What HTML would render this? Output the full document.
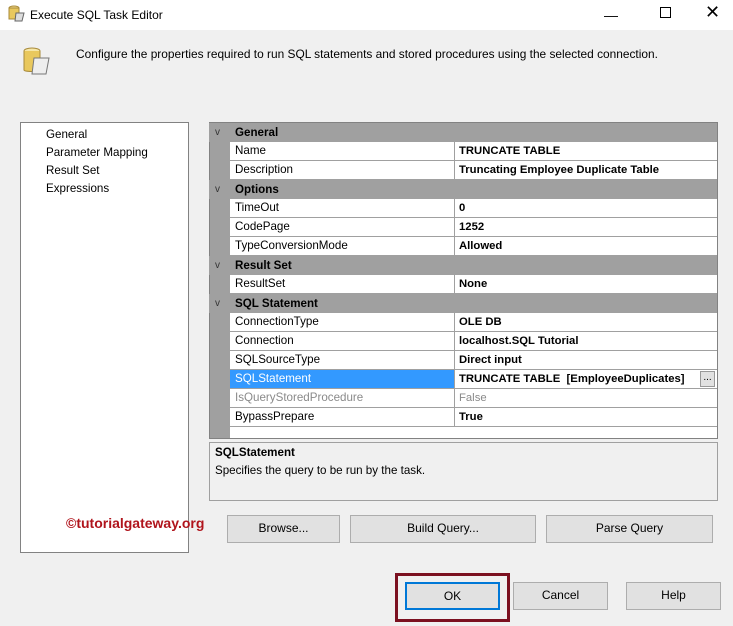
<!DOCTYPE html>
<html><head><style>
*{box-sizing:border-box;margin:0;padding:0}
body{width:733px;height:626px;background:#f0f0f0;font-family:"Liberation Sans",sans-serif;font-size:11.6px;color:#000;position:relative;overflow:hidden}
.abs{position:absolute}
.title{left:0;top:0;width:733px;height:30px;background:#fff}
.btn{position:absolute;background:#e1e1e1;border:1px solid #adadad;text-align:center;line-height:25px;font-size:12px}
.row{position:absolute;left:209px;width:508px;height:19px}
.row .n{position:absolute;left:21px;width:224px;height:19px;background:#fff;border-bottom:1px solid #a0a0a0;padding-left:5px;line-height:18px}
.row .v{position:absolute;left:245px;width:263px;height:19px;background:#fff;border-bottom:1px solid #a0a0a0;border-left:1px solid #a0a0a0;padding-left:4px;line-height:18px;font-weight:bold;font-size:11.3px}
.hdr{background:#a0a0a0;font-weight:bold;line-height:19px}
.hdr span{position:absolute;left:26px}
.hdr i{position:absolute;left:6px;font-style:normal;font-weight:normal;font-size:10px;color:#333}
</style></head><body>
<div class="abs title"></div>
<svg class="abs" style="left:8px;top:5px" width="18" height="18"><ellipse cx="6" cy="3" rx="5" ry="2" fill="#f3dc8e" stroke="#a88a3a"/><rect x="1" y="3" width="10" height="11" fill="#e9c85d" stroke="#a88a3a"/><path d="M8 8h8l-2 8H7z" fill="#ddd" stroke="#666"/></svg>
<div class="abs" style="left:30px;top:8px;font-size:12px">Execute SQL Task Editor</div>
<div class="abs" style="left:604px;top:7px;font-size:14px">—</div>
<div class="abs" style="left:660px;top:7px;width:11px;height:11px;border:1px solid #000"></div>
<div class="abs" style="left:705px;top:2px;font-size:18px">✕</div>
<svg class="abs" style="left:22px;top:46px" width="32" height="32"><ellipse cx="10" cy="5" rx="8" ry="3" fill="#f6e7a8" stroke="#a88a3a"/><path d="M2 5v19c0 2 16 2 16 0V5" fill="#e9c85d" stroke="#a88a3a"/><path d="M12 12h15l-3 16H10z" fill="#eee" stroke="#777"/></svg>
<div class="abs" style="left:76px;top:47px;font-size:11.9px">Configure the properties required to run SQL statements and stored procedures using the selected connection.</div>
<div class="abs" style="left:20px;top:122px;width:169px;height:431px;background:#fff;border:1px solid #828282"></div>
<div class="abs" style="left:46px;top:126px;line-height:18px">General<br>Parameter Mapping<br>Result Set<br>Expressions</div>
<div class="abs" style="left:209px;top:122px;width:509px;height:317px;background:#a0a0a0;border:1px solid #828282"></div>
<div class="abs" style="left:230px;top:427px;width:487px;height:11px;background:#fff"></div>

<div class="row hdr" style="top:123px"><i>v</i><span>General</span></div>
<div class="row" style="top:142px"><div class="n">Name</div><div class="v">TRUNCATE TABLE</div></div>
<div class="row" style="top:161px"><div class="n">Description</div><div class="v">Truncating Employee Duplicate Table</div></div>
<div class="row hdr" style="top:180px"><i>v</i><span>Options</span></div>
<div class="row" style="top:199px"><div class="n">TimeOut</div><div class="v">0</div></div>
<div class="row" style="top:218px"><div class="n">CodePage</div><div class="v">1252</div></div>
<div class="row" style="top:237px"><div class="n">TypeConversionMode</div><div class="v">Allowed</div></div>
<div class="row hdr" style="top:256px"><i>v</i><span>Result Set</span></div>
<div class="row" style="top:275px"><div class="n">ResultSet</div><div class="v">None</div></div>
<div class="row hdr" style="top:294px"><i>v</i><span>SQL Statement</span></div>
<div class="row" style="top:313px"><div class="n">ConnectionType</div><div class="v">OLE DB</div></div>
<div class="row" style="top:332px"><div class="n">Connection</div><div class="v">localhost.SQL Tutorial</div></div>
<div class="row" style="top:351px"><div class="n">SQLSourceType</div><div class="v">Direct input</div></div>
<div class="row" style="top:370px"><div class="n" style="background:#3399ff;color:#fff">SQLStatement</div><div class="v">TRUNCATE TABLE&nbsp; [EmployeeDuplicates]<div class="abs" style="left:245px;top:1px;width:15px;height:16px;background:#e1e1e1;border:1px solid #999;font-weight:normal;font-size:10px;line-height:12px;text-align:center">...</div></div></div>
<div class="row" style="top:389px"><div class="n" style="color:#8a8a8a">IsQueryStoredProcedure</div><div class="v" style="color:#8a8a8a;font-weight:normal">False</div></div>
<div class="row" style="top:408px"><div class="n">BypassPrepare</div><div class="v">True</div></div>

<div class="abs" style="left:209px;top:442px;width:509px;height:59px;border:1px solid #a0a0a0"></div>
<div class="abs" style="left:215px;top:446px;font-weight:bold">SQLStatement</div>
<div class="abs" style="left:215px;top:464px">Specifies the query to be run by the task.</div>
<div class="abs" style="left:66px;top:515px;color:#b0141c;font-weight:bold;font-size:14px">©tutorialgateway.org</div>
<div class="btn" style="left:227px;top:515px;width:113px;height:28px">Browse...</div>
<div class="btn" style="left:350px;top:515px;width:186px;height:28px">Build Query...</div>
<div class="btn" style="left:546px;top:515px;width:167px;height:28px">Parse Query</div>
<div class="abs" style="left:395px;top:573px;width:115px;height:49px;border:3px solid #7b1020"></div>
<div class="btn" style="left:405px;top:582px;width:95px;height:28px;border:2px solid #0078d7;line-height:24px">OK</div>
<div class="btn" style="left:513px;top:582px;width:95px;height:28px">Cancel</div>
<div class="btn" style="left:626px;top:582px;width:95px;height:28px">Help</div>
</body></html>
